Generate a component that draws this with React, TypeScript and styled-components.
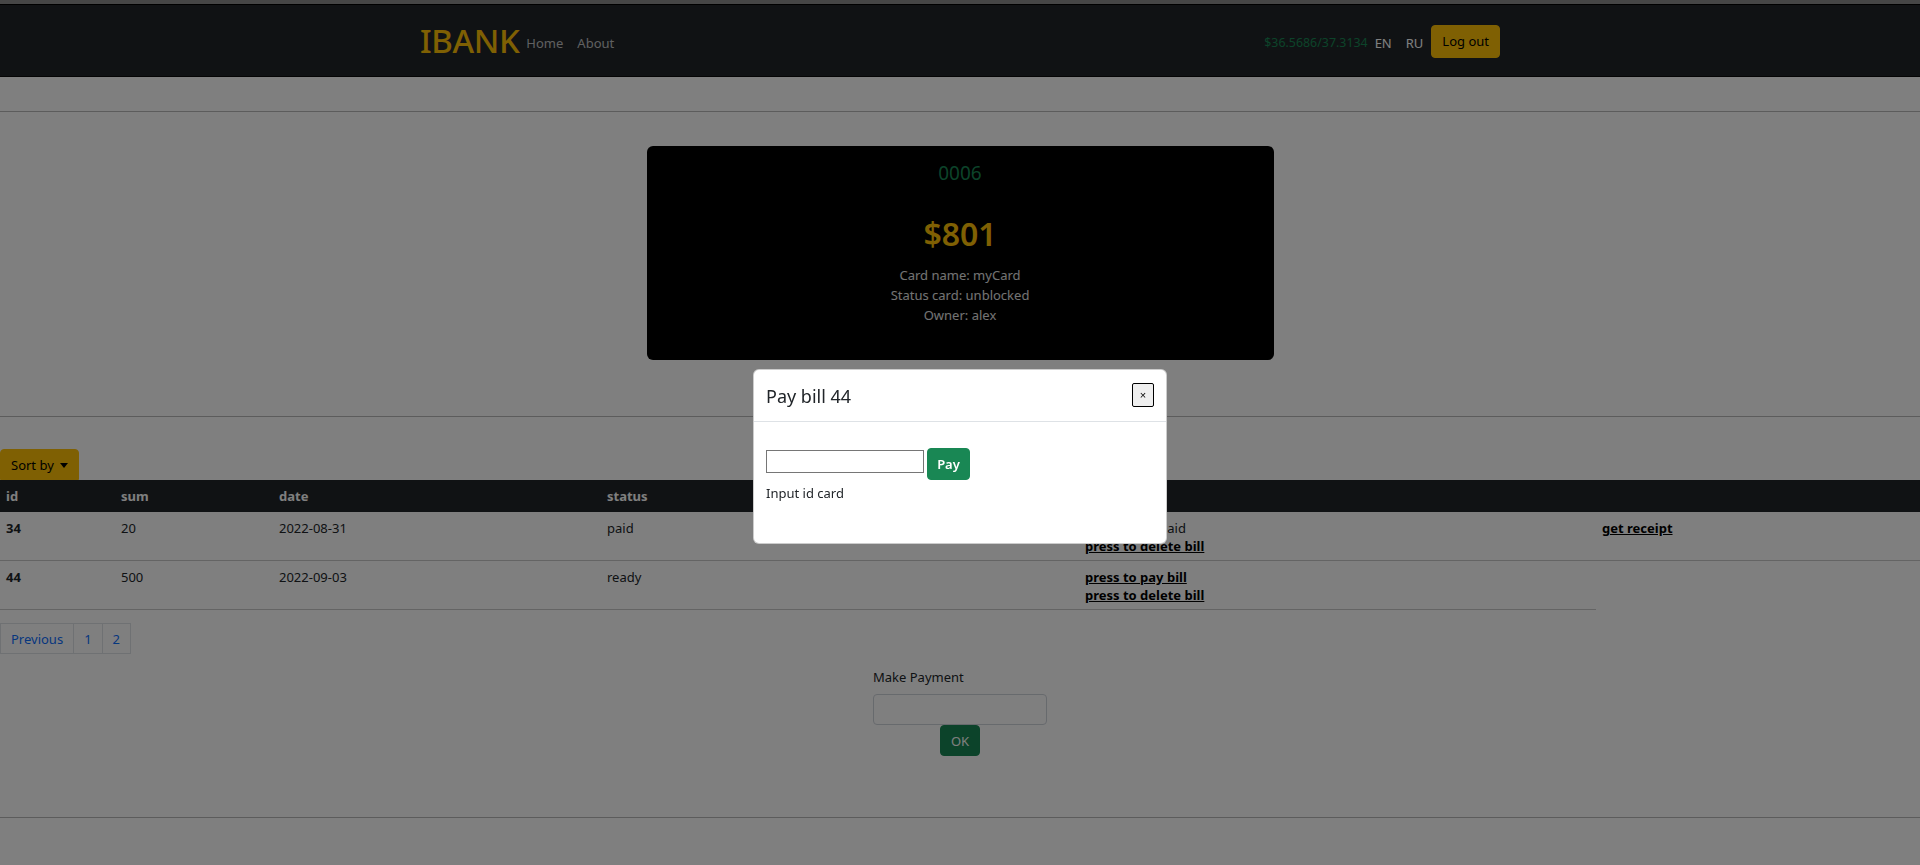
import React from "react";
import styled, { createGlobalStyle } from "styled-components";

const GlobalStyle = createGlobalStyle`
  html, body { margin: 0; padding: 0; }
  body {
    font-family: "Noto Sans", "Open Sans", sans-serif;
    background: #ffffff;
    color: #212529;
    font-size: 13px;
  }
  * { box-sizing: border-box; }
`;

const Page = styled.div`
  min-height: 865px;
  display: flex;
  flex-direction: column;
`;

const TopStrip = styled.div`
  height: 5px;
  background: #8c8c8c;
  border-bottom: 1px solid #000;
`;

const NavBar = styled.nav`
  height: 72px;
  background: #212529;
  border-bottom: 1px solid #0a0a0a;
  display: flex;
  justify-content: center;
`;

const NavInner = styled.div`
  width: 1080px;
  display: flex;
  align-items: center;
  justify-content: space-between;
`;

const NavGroup = styled.div`
  display: flex;
  align-items: center;
`;

const Brand = styled.a`
  color: #ffc107;
  font-size: 33px;
  font-weight: 500;
  line-height: 40px;
  text-decoration: none;
  letter-spacing: -0.4px;
  margin-right: 0;
`;

const NavLink = styled.a<{ $light?: boolean }>`
  color: ${(p) => (p.$light ? "#ffffff" : "rgba(255,255,255,0.72)")};
  font-size: 13px;
  padding: 0 7px;
  text-decoration: none;
  margin-top: 4px;
  &:first-of-type { padding-left: 5px; }
`;

const Rate = styled.span`
  color: #198754;
  font-size: 12.4px;
  margin-right: 2px;
  margin-top: 4px;
`;

const WarnButton = styled.button<{ $flatBottom?: boolean }>`
  background: #ffc107;
  color: #000;
  border: 1px solid #ffc107;
  border-radius: ${(p) => (p.$flatBottom ? "4px 4px 0 0" : "4px")};
  font-family: inherit;
  font-size: 13px;
  padding: 0 10px;
  height: 33px;
  display: inline-flex;
  align-items: center;
  gap: 6px;
  cursor: pointer;
`;

const LogOut = styled(WarnButton)`
  margin-left: 1px;
  margin-top: 1px;
`;

const SortButton = styled(WarnButton)`
  height: 31px;
`;

const Rule = styled.hr<{ $top: number }>`
  margin: ${(p) => p.$top}px 0 0 0;
  border: 0;
  border-top: 1px solid rgba(0, 0, 0, 0.28);
  height: 0;
`;

const CardWrap = styled.section`
  display: flex;
  justify-content: center;
  margin-top: 34px;
`;

const BankCard = styled.div`
  width: 627px;
  height: 214px;
  background: #000;
  border-radius: 6px;
  padding-top: 12px;
  display: flex;
  flex-direction: column;
  align-items: center;
`;

const CardNumber = styled.div`
  color: #198754;
  font-size: 19px;
  line-height: 30px;
`;

const CardBalance = styled.div`
  color: #ffc107;
  font-size: 32px;
  font-weight: 600;
  line-height: 44px;
  margin-top: 24px;
`;

const CardInfo = styled.div`
  color: #e6e6e6;
  font-size: 13px;
  line-height: 20px;
  margin-top: 9px;
  text-align: center;
`;

const Toolbar = styled.div`
  margin-top: 32px;
  display: flex;
`;

const Caret = styled.span`
  width: 0;
  height: 0;
  border-left: 4px solid transparent;
  border-right: 4px solid transparent;
  border-top: 5px solid #000;
  margin-top: 1px;
`;

const Table = styled.table`
  width: 100%;
  border-collapse: collapse;
  table-layout: fixed;
`;

const HeadCell = styled.th`
  background: #212529;
  color: #fff;
  font-weight: 700;
  text-align: left;
  font-size: 13px;
  line-height: 18px;
  padding: 7px 6px;
`;

const Cell = styled.td<{ $bold?: boolean }>`
  font-size: 13px;
  line-height: 18px;
  padding: 7px 6px 5px;
  vertical-align: top;
  border-bottom: 1px solid #c8c8c8;
  font-weight: ${(p) => (p.$bold ? 700 : 400)};
  color: #212529;
`;

const ActionLink = styled.a`
  display: block;
  color: #000;
  font-weight: 700;
  text-decoration: underline;
`;

const Pagination = styled.ul`
  list-style: none;
  margin: 13px 0 0;
  padding: 0;
  display: flex;
`;

const PageItem = styled.li`
  border: 1px solid #dee2e6;
  margin-left: -1px;
  &:first-child { margin-left: 0; }
  color: #0d6efd;
  font-size: 13px;
  height: 31px;
  display: flex;
  align-items: center;
  justify-content: center;
  padding: 0 10px;
`;

const PaymentForm = styled.form`
  margin: 14px auto 0;
  width: 174px;
  display: flex;
  flex-direction: column;
  align-items: center;
`;

const Label = styled.label`
  align-self: flex-start;
  font-size: 13px;
  line-height: 18px;
  margin-bottom: 8px;
`;

const TextInput = styled.input`
  width: 174px;
  height: 31px;
  border: 1px solid #ced4da;
  border-radius: 4px;
  background: #fff;
`;

const GreenButton = styled.button<{ $bold?: boolean }>`
  background: #198754;
  color: #fff;
  border: 1px solid #198754;
  border-radius: 4px;
  font-family: inherit;
  font-size: 13px;
  font-weight: ${(p) => (p.$bold ? 600 : 400)};
  height: 31px;
  padding: 0 10px;
  cursor: pointer;
`;

const Backdrop = styled.div`
  position: fixed;
  inset: 0;
  background: rgba(0, 0, 0, 0.5);
`;

const Modal = styled.div`
  position: fixed;
  top: 369px;
  left: 753px;
  width: 414px;
  background: #fff;
  border-radius: 6px;
  border: 1px solid rgba(0, 0, 0, 0.2);
`;

const ModalHeader = styled.div`
  height: 52px;
  border-bottom: 1px solid #dee2e6;
  padding: 0 12px;
  display: flex;
  align-items: center;
  justify-content: space-between;
`;

const ModalTitle = styled.h5`
  margin: 0;
  font-size: 18px;
  font-weight: 400;
  color: #212529;
`;

const CloseButton = styled.button`
  width: 22px;
  height: 24px;
  background: #efefef;
  border: 1.5px solid #000;
  border-radius: 2px;
  font-size: 11px;
  padding: 0;
  font-family: "Liberation Sans", sans-serif;
  color: #000;
  margin-top: -1px;
`;

const ModalBody = styled.div`
  padding: 26px 12px 41px;
`;

const InlineRow = styled.div`
  display: flex;
  align-items: flex-start;
  gap: 3px;
`;

const IdInput = styled.input`
  width: 158px;
  height: 23px;
  border: 1px solid #767676;
  border-radius: 0;
  padding: 0;
  margin-top: 2px;
`;

const PayButton = styled(GreenButton)`
  height: 32px;
  width: 43px;
  padding: 0;
`;

const Hint = styled.div`
  font-size: 13px;
  line-height: 18px;
  margin-top: 4px;
`;

const bills = [
  { id: 34, sum: 20, date: "2022-08-31", status: "paid" },
  { id: 44, sum: 500, date: "2022-09-03", status: "ready" },
];

export default function App() {
  return (
    <>
      <GlobalStyle />
      <Page>
        <TopStrip />
        <NavBar>
          <NavInner>
            <NavGroup>
              <Brand href="#">IBANK</Brand>
              <NavLink href="#">Home</NavLink>
              <NavLink href="#">About</NavLink>
            </NavGroup>
            <NavGroup>
              <Rate>$36.5686/37.3134</Rate>
              <NavLink $light href="#">EN</NavLink>
              <NavLink $light href="#">RU</NavLink>
              <LogOut>Log out</LogOut>
            </NavGroup>
          </NavInner>
        </NavBar>

        <Rule $top={34} />

        <CardWrap>
          <BankCard>
            <CardNumber>0006</CardNumber>
            <CardBalance>$801</CardBalance>
            <CardInfo>
              Card name: myCard
              <br />
              Status card: unblocked
              <br />
              Owner: alex
            </CardInfo>
          </BankCard>
        </CardWrap>

        <Rule $top={56} />

        <Toolbar>
          <SortButton $flatBottom>
            Sort by <Caret />
          </SortButton>
        </Toolbar>

        <Table>
          <colgroup>
            <col style={{ width: 115 }} />
            <col style={{ width: 158 }} />
            <col style={{ width: 328 }} />
            <col style={{ width: 478 }} />
            <col style={{ width: 517 }} />
            <col />
          </colgroup>
          <thead>
            <tr>
              <HeadCell>id</HeadCell>
              <HeadCell>sum</HeadCell>
              <HeadCell>date</HeadCell>
              <HeadCell>status</HeadCell>
              <HeadCell></HeadCell>
              <HeadCell></HeadCell>
            </tr>
          </thead>
          <tbody>
            <tr>
              <Cell $bold>{bills[0].id}</Cell>
              <Cell>{bills[0].sum}</Cell>
              <Cell>{bills[0].date}</Cell>
              <Cell>{bills[0].status}</Cell>
              <Cell>
                this bill was paid
                <ActionLink href="#">press to delete bill</ActionLink>
              </Cell>
              <Cell>
                <ActionLink href="#">get receipt</ActionLink>
              </Cell>
            </tr>
            <tr>
              <Cell $bold>{bills[1].id}</Cell>
              <Cell>{bills[1].sum}</Cell>
              <Cell>{bills[1].date}</Cell>
              <Cell>{bills[1].status}</Cell>
              <Cell>
                <ActionLink href="#">press to pay bill</ActionLink>
                <ActionLink href="#">press to delete bill</ActionLink>
              </Cell>
            </tr>
          </tbody>
        </Table>

        <Pagination>
          <PageItem>Previous</PageItem>
          <PageItem>1</PageItem>
          <PageItem>2</PageItem>
        </Pagination>

        <PaymentForm onSubmit={(e) => e.preventDefault()}>
          <Label>Make Payment</Label>
          <TextInput />
          <GreenButton type="submit">OK</GreenButton>
        </PaymentForm>

        <Rule $top={61} />
      </Page>

      <Backdrop />
      <Modal>
        <ModalHeader>
          <ModalTitle>Pay bill 44</ModalTitle>
          <CloseButton>×</CloseButton>
        </ModalHeader>
        <ModalBody>
          <InlineRow>
            <IdInput />
            <PayButton $bold>Pay</PayButton>
          </InlineRow>
          <Hint>Input id card</Hint>
        </ModalBody>
      </Modal>
    </>
  );
}
